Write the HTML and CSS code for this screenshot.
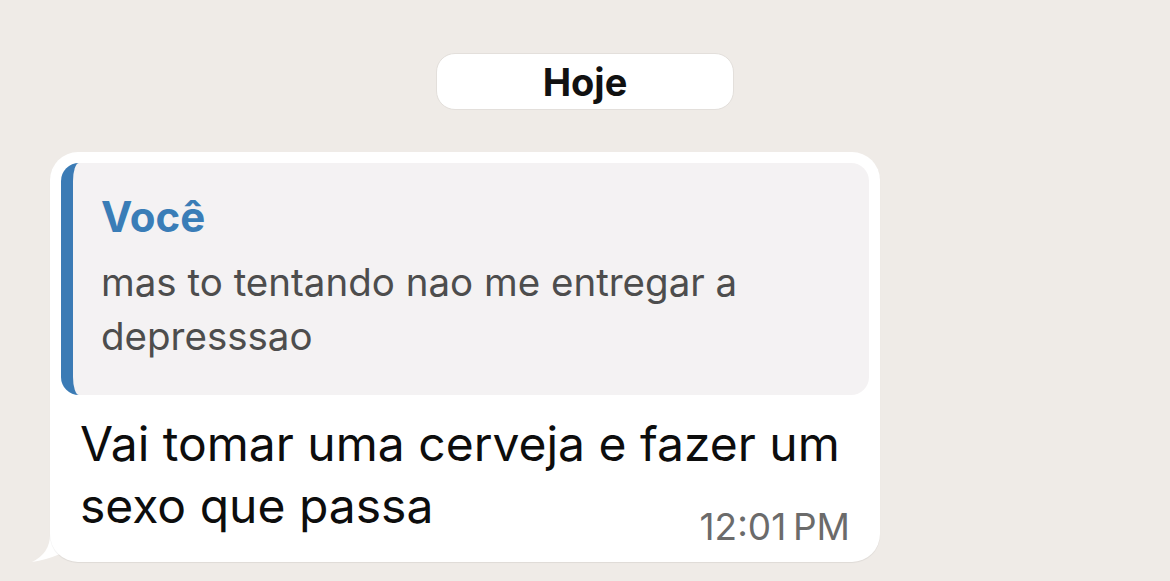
FILE: index.html
```html
<!DOCTYPE html>
<html lang="pt">
<head>
<meta charset="utf-8">
<link rel="stylesheet" href="styles.css">
</head>
<body>
<div class="chat">
  <div class="day-row"><div class="day">Hoje</div></div>
  <div class="bubble">
    <svg class="tail" width="60" height="46" viewBox="0 0 60 46"><path d="M18 0 L18 18 Q18 36 0 45 Q14 43 28 37 Q40 45 58 45 L58 0 Z" fill="#fff"/></svg>
    <div class="quote">
      <div class="quote-author">Você</div>
      <div class="quote-text">mas to tentando nao me entregar a depresssao</div>
    </div>
    <div class="message"><span class="message-text">Vai tomar uma cerveja e fazer um sexo que passa</span></div>
    <span class="time">12:01&#8239;PM</span>
  </div>
</div>
</body>
</html>
```
FILE: styles.css
```css
html, body {
  margin: 0;
  padding: 0;
  background: #efebe7;
  font-family: Inter, "Noto Sans", sans-serif;
}
.chat {
  width: 1170px;
  height: 581px;
  overflow: hidden;
  background: #efebe7;
  isolation: isolate;
}
.day-row {
  display: flex;
  justify-content: center;
  padding-top: 53px;
}
.day {
  width: 298px;
  height: 57px;
  box-sizing: border-box;
  background: #fff;
  border-radius: 19px;
  border: 1px solid #e3dfdb;
  display: flex;
  align-items: center;
  justify-content: center;
  font-weight: 700;
  font-size: 38px;
  line-height: 40px;
  color: #111;
}
.bubble {
  position: relative;
  margin: 42px 0 0 50px;
  width: 830px;
  height: 410px;
  box-sizing: border-box;
  background: #fff;
  border-radius: 28px;
  padding: 11px;
  box-shadow: 0 1px 1px rgba(0,0,0,0.07);
}
.tail {
  position: absolute;
  z-index: -1;
  left: -18px;
  bottom: -1px;
}
.quote {
  height: 232px;
  box-sizing: border-box;
  background: #f4f2f3;
  border-left: 12px solid #3b7bb5;
  border-radius: 18px;
  padding: 30px 30px 0 28px;
}
.quote-author {
  font-weight: 700;
  font-size: 42px;
  color: #3a7db7;
  line-height: 48px;
}
.quote-text {
  margin-top: 14px;
  font-size: 38.5px;
  line-height: 54px;
  color: #4d4d4d;
  width: 690px;
}
.message {
  padding: 18px 0 0 19px;
  font-size: 48px;
  line-height: 62px;
  color: #0d0d0d;
  width: 780px;
}
.time {
  position: absolute;
  right: 30px;
  bottom: 17px;
  font-size: 37px;
  line-height: 37px;
  color: #6b6b6b;
}
```
